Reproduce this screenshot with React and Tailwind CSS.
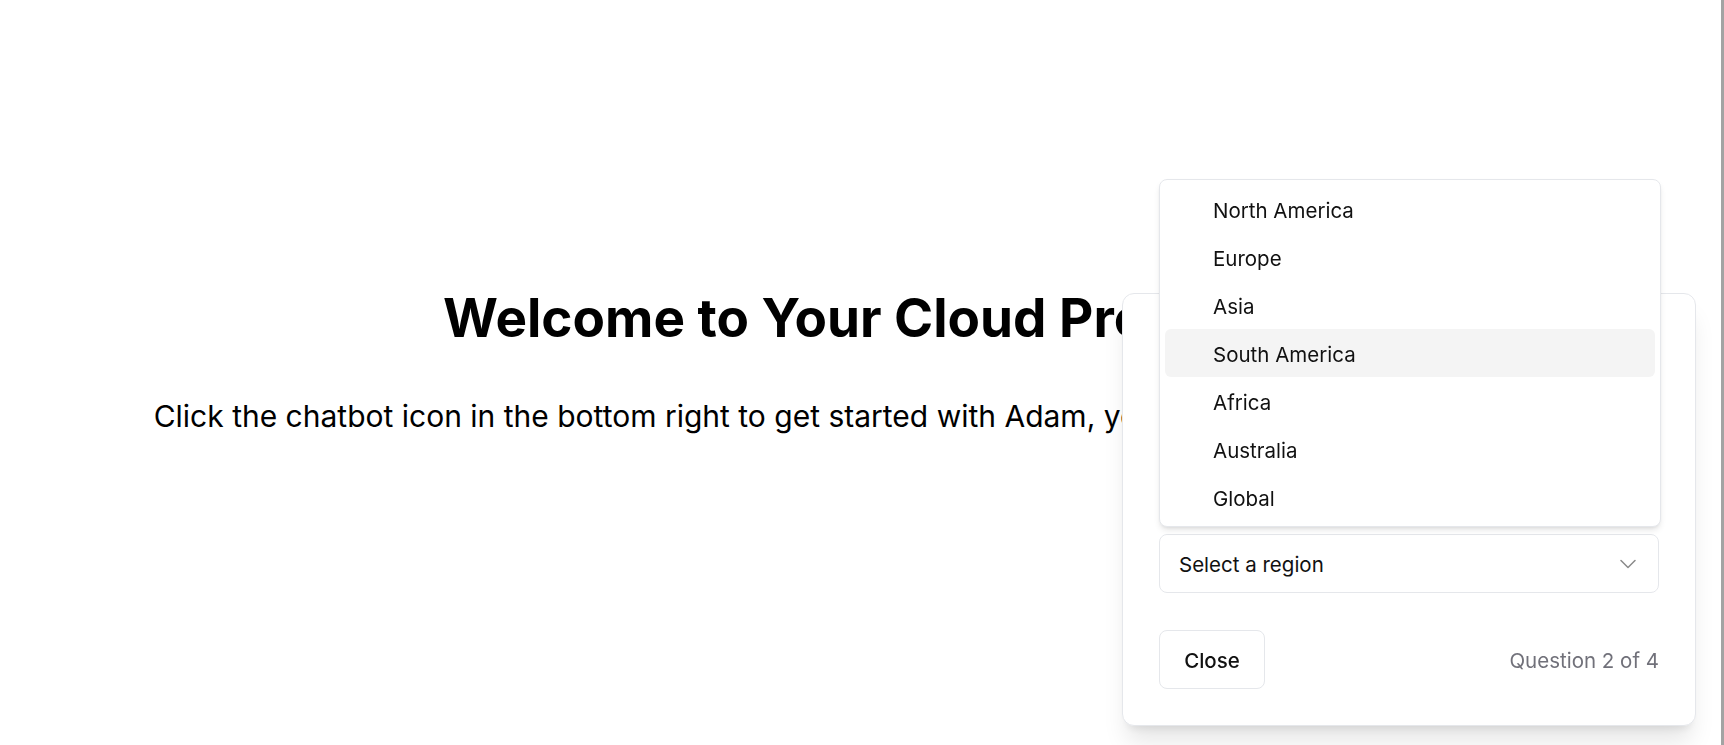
import React from "react";

const regions = ["North America", "Europe", "Asia", "South America", "Africa", "Australia", "Global"];

const ChatCard = () => {
    return (
        <div className="fixed right-[28px] bottom-[19px] w-[574px] h-[433px] flex flex-col rounded-xl border border-gray-200 bg-white p-9 shadow-xl text-left">
            {/* question area, covered by the open list */}
            <div className="flex-1" />

            {/* select */}
            <div className="relative">
                <div className="absolute bottom-full left-0 mb-[7px] w-[502px] rounded-lg border border-gray-200 bg-white p-[5px] shadow-md">
                    {regions.map((r) => (
                        <div
                            key={r}
                            className={`h-12 flex items-center pl-12 pt-1 rounded-md text-[20.5px] text-[#111] ${r === "South America" ? "bg-[#f4f4f4]" : ""}`}
                        >
                            {r}
                        </div>
                    ))}
                </div>
                <button
                    type="button"
                    className="w-full h-[59px] flex items-center justify-between rounded-lg border border-gray-200 bg-white pl-[19px] pr-[22px] text-[20.5px] text-[#111]"
                >
                    <span className="pt-1">Select a region</span>
                    <svg className="w-4 h-4 text-[#8a8a8a]" viewBox="0 0 16 16" fill="none">
                        <path d="M1 4.5l7 7 7-7" stroke="currentColor" strokeWidth="1.5" strokeLinecap="round" strokeLinejoin="round" />
                    </svg>
                </button>
            </div>

            {/* footer */}
            <div className="mt-[37px] flex items-center justify-between">
                <button
                    type="button"
                    className="h-[59px] w-[106px] pt-1 rounded-lg border border-gray-200 bg-white text-[20.5px] font-medium text-[#111]"
                >
                    Close
                </button>
                <span className="pt-1 text-[20.5px] text-[#71717a]">Question 2 of 4</span>
            </div>
        </div>
    );
};

const App = () => {
    return (
        <div className="h-screen flex bg-white font-['Inter',sans-serif]">
            <main className="flex-1 flex flex-col items-center pt-[292px] text-center text-black">
                <h1 className="text-[53px] leading-none font-bold">Welcome to Your Cloud Provider</h1>
                <p className="mt-[53px] text-3xl leading-9">
                    Click the chatbot icon in the bottom right to get started with Adam, your cloud infrastructure advisor
                </p>
            </main>
            <div className="w-[3px] bg-[#a3a3a3]" />
            <ChatCard />
        </div>
    );
};

export default App;
